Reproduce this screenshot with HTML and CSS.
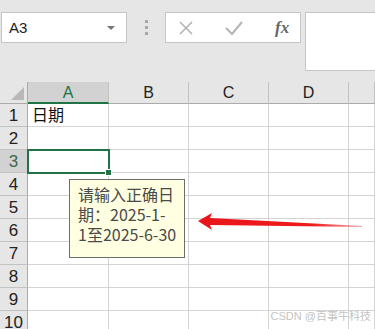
FILE: index.html
```html
<!DOCTYPE html>
<html lang="zh">
<head>
    <meta charset="UTF-8">
    <meta name="viewport" content="width=device-width, initial-scale=1.0">
    <title>日期验证</title>
    <link rel="stylesheet" href="styles.css">
</head>
<body>
    <div class="toolbar">
        <div class="namebox">
            <span>A3</span>
            <span class="caret"></span>
        </div>
        <div class="dots"><i></i><i></i><i></i></div>
        <div class="fbuttons">
            <svg width="18" height="18" viewBox="0 0 18 18"><path d="M3 3 L15 15 M15 3 L3 15" stroke="#b4b4b4" stroke-width="1.6" fill="none"/></svg>
            <svg width="20" height="18" viewBox="0 0 20 18"><path d="M2 9 L8 15 L18 3" stroke="#b4b4b4" stroke-width="2" fill="none"/></svg>
            <span class="fx">fx</span>
        </div>
        <div class="finput"></div>
    </div>

    <div class="sheet">
        <div class="corner"><span class="tri"></span></div>
        <div class="colhead active">A</div>
        <div class="colhead">B</div>
        <div class="colhead">C</div>
        <div class="colhead">D</div>
        <div class="colhead"></div>

        <div class="rowhead">1</div><div class="cell">日期</div><div class="cell"></div><div class="cell"></div><div class="cell"></div><div class="cell"></div>
        <div class="rowhead">2</div><div class="cell"></div><div class="cell"></div><div class="cell"></div><div class="cell"></div><div class="cell"></div>
        <div class="rowhead active">3</div><div class="cell selected"></div><div class="cell"></div><div class="cell"></div><div class="cell"></div><div class="cell"></div>
        <div class="rowhead">4</div><div class="cell"></div><div class="cell"></div><div class="cell"></div><div class="cell"></div><div class="cell"></div>
        <div class="rowhead">5</div><div class="cell"></div><div class="cell"></div><div class="cell"></div><div class="cell"></div><div class="cell"></div>
        <div class="rowhead">6</div><div class="cell"></div><div class="cell"></div><div class="cell"></div><div class="cell"></div><div class="cell"></div>
        <div class="rowhead">7</div><div class="cell"></div><div class="cell"></div><div class="cell"></div><div class="cell"></div><div class="cell"></div>
        <div class="rowhead">8</div><div class="cell"></div><div class="cell"></div><div class="cell"></div><div class="cell"></div><div class="cell"></div>
        <div class="rowhead">9</div><div class="cell"></div><div class="cell"></div><div class="cell"></div><div class="cell"></div><div class="cell"></div>
        <div class="rowhead">10</div><div class="cell"></div><div class="cell"></div><div class="cell"></div><div class="cell"></div><div class="cell"></div>

        <div class="tip">请输入正确日<br>期：2025-1-<br>1至2025-6-30</div>

        <svg class="arrow" width="170" height="24" viewBox="0 0 170 24">
            <defs>
                <linearGradient id="red" x1="0" y1="0" x2="1" y2="0">
                    <stop offset="0" stop-color="#e8161a"/>
                    <stop offset="0.7" stop-color="#ee1c1c"/>
                    <stop offset="1" stop-color="#f36a6a" stop-opacity="0.6"/>
                </linearGradient>
            </defs>
            <path d="M2 10 L16 2 L14 7 L166 15 L166 16 L14 14 L16 19 Z" fill="url(#red)"/>
        </svg>
    </div>

    <div class="mark">CSDN @百事牛科技</div>
</body>
</html>
```

FILE: styles.css
```css
body {
    margin: 0;
    width: 375px;
    height: 329px;
    overflow: hidden;
    background: #e6e6e6;
    font-family: "Liberation Sans", "Noto Sans CJK SC", sans-serif;
    position: relative;
}
.toolbar {
    height: 82px;
    display: flex;
    align-items: flex-start;
    padding: 12px 0 0 1px;
    box-sizing: border-box;
}
.namebox {
    width: 126px;
    height: 31px;
    background: white;
    border: 1px solid #c6c6c6;
    box-sizing: border-box;
    display: flex;
    align-items: center;
    justify-content: space-between;
    padding: 0 11px 0 7px;
    font-size: 15px;
    color: #222;
}
.caret {
    width: 0;
    height: 0;
    border-left: 4px solid transparent;
    border-right: 4px solid transparent;
    border-top: 4px solid #777;
}
.dots {
    width: 38px;
    height: 31px;
    display: flex;
    flex-direction: column;
    align-items: center;
    justify-content: center;
    gap: 3px;
}
.dots i {
    width: 3px;
    height: 3px;
    background: #a8a8a8;
}
.fbuttons {
    width: 136px;
    height: 31px;
    background: white;
    border: 1px solid #c6c6c6;
    box-sizing: border-box;
    display: flex;
    align-items: center;
    gap: 29px;
    padding-left: 11px;
}
.fx {
    font-family: "Liberation Serif", serif;
    font-style: italic;
    font-weight: bold;
    font-size: 17px;
    color: #666;
    margin-left: 2px;
}
.finput {
    flex: 1;
    margin-left: 4px;
    height: 57px;
    background: white;
    border: 1px solid #c6c6c6;
    border-right: none;
}
.sheet {
    display: grid;
    grid-template-columns: 28px 81px 80px 80px 80px 1fr;
    grid-template-rows: 22px repeat(10, 23px);
    background: white;
}
.corner {
    background: #e6e6e6;
    border-right: 1px solid #ababab;
    border-bottom: 1px solid #ababab;
    position: relative;
}
.tri {
    position: absolute;
    right: 3px;
    bottom: 3px;
    width: 0;
    height: 0;
    border-left: 13px solid transparent;
    border-bottom: 13px solid #b9b9b9;
}
.colhead {
    background: #e6e6e6;
    border-right: 1px solid #c2c2c2;
    border-bottom: 1px solid #ababab;
    text-align: center;
    font-size: 16px;
    line-height: 21px;
    color: #222;
}
.colhead.active {
    background: #d2d2d2;
    color: #217346;
    border-bottom: 2px solid #217346;
}
.rowhead {
    background: #e6e6e6;
    border-right: 1px solid #ababab;
    border-bottom: 1px solid #c2c2c2;
    text-align: center;
    font-size: 17px;
    line-height: 23px;
    color: #222;
}
.rowhead.active {
    background: #d2d2d2;
    color: #3c6a4d;
}
.cell {
    border-right: 1px solid #d4d4d4;
    border-bottom: 1px solid #d4d4d4;
    font-size: 16px;
    line-height: 23px;
    padding-left: 4px;
    color: #111;
}
.cell.selected {
    outline: 2px solid #217346;
    outline-offset: -1px;
    position: relative;
}
.cell.selected::after {
    content: "";
    position: absolute;
    right: -4px;
    bottom: -4px;
    width: 5px;
    height: 5px;
    background: #217346;
    border: 1px solid white;
}
.tip {
    position: absolute;
    left: 69px;
    top: 179px;
    width: 116px;
    height: 79px;
    box-sizing: border-box;
    padding: 4px 0 0 8px;
    background: #ffffe1;
    border: 1px solid #6e6e6e;
    font-family: "Noto Sans CJK SC", sans-serif;
    font-size: 16px;
    line-height: 20px;
    color: #4a4a4a;
    white-space: nowrap;
}
.arrow {
    position: absolute;
    left: 196px;
    top: 211px;
}
.mark {
    position: absolute;
    right: 4px;
    bottom: 6px;
    font-size: 11px;
    color: #c4c4c4;
    font-family: "Liberation Sans", "Noto Sans CJK SC", sans-serif;
}
```
